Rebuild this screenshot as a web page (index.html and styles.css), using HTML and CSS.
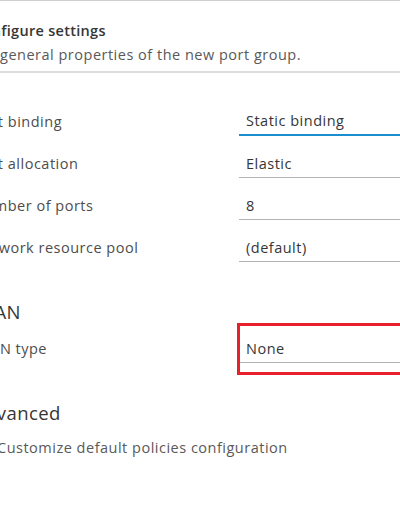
FILE: index.html
```html
<!DOCTYPE html>
<html lang="en">
<head>
<meta charset="utf-8">
<title>New Distributed Port Group - Configure settings</title>
<link rel="stylesheet" href="styles.css">
</head>
<body>
<div class="wizard">
  <header class="step-header">
    <h2 class="step-title">Configure settings</h2>
    <p class="step-desc">Set general properties of the new port group.</p>
  </header>

  <div class="form form-general">
    <div class="row">
      <div class="label">Port binding</div>
      <div class="field field-active">Static binding</div>
    </div>
    <div class="row">
      <div class="label">Port allocation</div>
      <div class="field">Elastic</div>
    </div>
    <div class="row">
      <div class="label">Number of ports</div>
      <div class="field">8</div>
    </div>
    <div class="row">
      <div class="label">Network resource pool</div>
      <div class="field">(default)</div>
    </div>
  </div>

  <h3 class="section-title section-vlan">VLAN</h3>
  <div class="form">
    <div class="row">
      <div class="label">VLAN type</div>
      <div class="field field-highlight">None</div>
    </div>
  </div>

  <h3 class="section-title section-adv">Advanced</h3>
  <label class="check-row">
    <span class="checkbox"></span>
    <span class="check-label">Customize default policies configuration</span>
  </label>
</div>
</body>
</html>
```

FILE: styles.css
```css
html, body {
  margin: 0;
  padding: 0;
  background: #ffffff;
  overflow: hidden;
}

body {
  width: 400px;
  height: 516px;
  font-family: "Open Sans", "Noto Sans", sans-serif;
  font-size: 14.5px;
  letter-spacing: 0.5px;
  color: #454545;
  border-top: 1px solid #cfcfcf;
  box-sizing: border-box;
}

.wizard {
  margin-left: -27px;
  width: 480px;
}

.step-header {
  padding-top: 20px;
  padding-bottom: 6px;
  border-bottom: 2px solid #dcdcdc;
}

.step-title {
  margin: 0;
  font-size: 14.5px;
  font-weight: 600;
  letter-spacing: 0.3px;
  line-height: 20px;
  color: #363636;
}

.step-desc {
  margin: 4px 0 0;
  font-size: 14.5px;
  line-height: 20px;
  color: #595959;
}

.form {
  display: flex;
  flex-direction: column;
}

.form-general {
  margin-top: 35px;
}

.row {
  display: grid;
  grid-template-columns: 266px 1fr;
  height: 28px;
  margin-bottom: 14px;
}

.label {
  font-size: 14.5px;
  line-height: 28px;
  color: #4d4d4d;
}

.field {
  position: relative;
  font-size: 14.5px;
  line-height: 27px;
  padding-left: 7px;
  color: #363636;
  border-bottom: 1px solid #b4b4b4;
}

.field-active {
  border-bottom: 2px solid #1a8fd0;
  line-height: 26px;
}

.field-highlight::after {
  content: "";
  position: absolute;
  top: -12px;
  bottom: -13px;
  left: -2px;
  right: -40px;
  border: 3px solid #e8202b;
}

.section-title {
  margin: 0;
  font-size: 18.5px;
  font-weight: 400;
  letter-spacing: 0.4px;
  line-height: 24px;
  color: #363636;
}

.section-vlan {
  margin-top: 24px;
  margin-bottom: 11px;
}

.section-adv {
  margin-top: 24px;
}

.check-row {
  display: flex;
  align-items: center;
  gap: 8px;
  margin-top: 13px;
  height: 20px;
}

.checkbox {
  width: 14px;
  height: 14px;
  border: 1px solid #8c8c8c;
  border-radius: 3px;
  flex: none;
}

.check-label {
  font-size: 14.5px;
  line-height: 20px;
  color: #595959;
}
```
